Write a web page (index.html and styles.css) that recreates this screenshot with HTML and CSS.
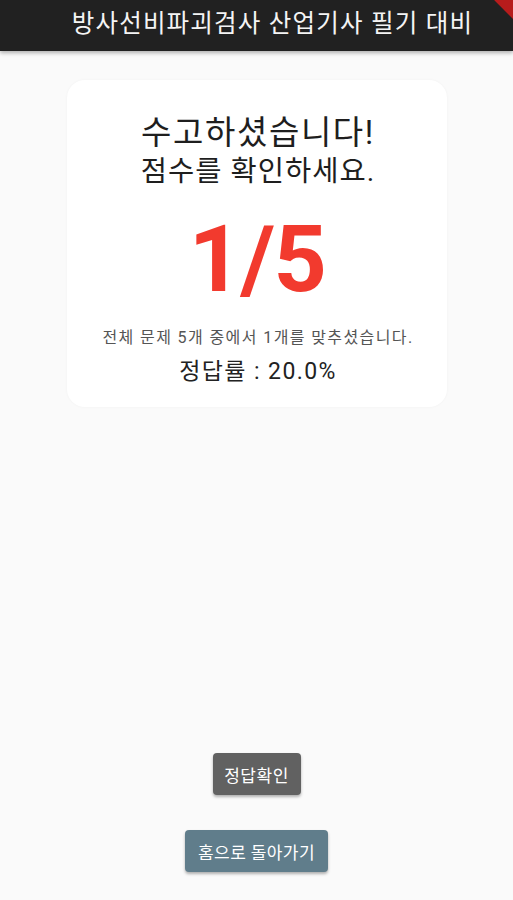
FILE: index.html
```html
<!DOCTYPE html>
<html lang="ko">
<head>
  <meta charset="UTF-8">
  <meta name="viewport" content="width=device-width, initial-scale=1.0">
  <title>방사선비파괴검사 산업기사 필기 대비</title>
  <link rel="stylesheet" href="styles.css">
</head>
<body>

<div class="appbar">
  <h1>방사선비파괴검사 산업기사 필기 대비</h1>
  <div class="debug"></div>
</div>

<div class="page">
  <div class="card">
    <div class="title">수고하셨습니다!</div>
    <div class="subtitle">점수를 확인하세요.</div>
    <div class="score">1/5</div>
    <div class="detail">전체 문제 5개 중에서 1개를 맞추셨습니다.</div>
    <div class="rate">정답률 : 20.0%</div>
  </div>

  <div class="actions">
    <button class="btn btn-answer">정답확인</button>
    <button class="btn btn-home">홈으로 돌아가기</button>
  </div>
</div>

</body>
</html>
```

FILE: styles.css
```css
body {
  font-family: Roboto, "Noto Sans CJK KR", sans-serif;
  background-color: #fafafa;
  color: #212121;
  margin: 0;
  height: 900px;
  overflow: hidden;
}

.appbar {
  position: relative;
  height: 51px;
  background: #212121;
  box-shadow: 0 2px 4px rgba(0, 0, 0, 0.3);
  display: flex;
  align-items: center;
  justify-content: center;
  overflow: hidden;
}

.appbar h1 {
  margin: 0 0 4px 32px;
  font-size: 24.5px;
  line-height: 34px;
  font-weight: 400;
  color: #f4f4f4;
  letter-spacing: 1.2px;
}

.debug {
  position: absolute;
  top: -6px;
  right: -22px;
  width: 60px;
  height: 14px;
  background: #b71c1c;
  transform: rotate(45deg);
}

.page {
  display: flex;
  flex-direction: column;
  align-items: center;
}

.card {
  margin-top: 29px;
  margin-left: 1px;
  width: 380px;
  height: 327px;
  background: #fff;
  border-radius: 18px;
  box-shadow: 0 0 3px rgba(0, 0, 0, 0.04);
  display: flex;
  flex-direction: column;
  align-items: center;
}

.title {
  margin-top: 31px;
  margin-left: 2px;
  font-size: 33px;
  line-height: 44px;
  color: #1e1e1e;
  letter-spacing: 1.6px;
}

.subtitle {
  margin-top: 1px;
  margin-left: 2px;
  font-size: 28.5px;
  line-height: 32px;
  color: #1e1e1e;
  letter-spacing: 1px;
}

.score {
  margin-top: 17px;
  font-size: 93px;
  font-weight: 700;
  line-height: 110px;
  color: #f23a2e;
  letter-spacing: -1.5px;
}

.detail {
  margin-top: 12px;
  margin-left: 2px;
  font-size: 16px;
  line-height: 22px;
  color: #555;
  letter-spacing: 1.4px;
}

.rate {
  margin-top: 8px;
  margin-left: 2px;
  font-size: 23px;
  line-height: 30px;
  color: #222;
  letter-spacing: 1.4px;
}

.actions {
  margin-top: 346px;
  display: flex;
  flex-direction: column;
  align-items: center;
  gap: 35px;
}

.btn {
  font-family: inherit;
  border: none;
  border-radius: 4px;
  color: #fff;
  font-size: 17px;
  height: 42px;
  padding: 0 6px;
  box-shadow: 0 2px 3px rgba(0, 0, 0, 0.3);
}

.btn-answer {
  width: 88px;
  background: #616161;
  letter-spacing: 0.5px;
}

.btn-home {
  width: 143px;
  background: #607d8b;
  letter-spacing: 0.4px;
}
```
